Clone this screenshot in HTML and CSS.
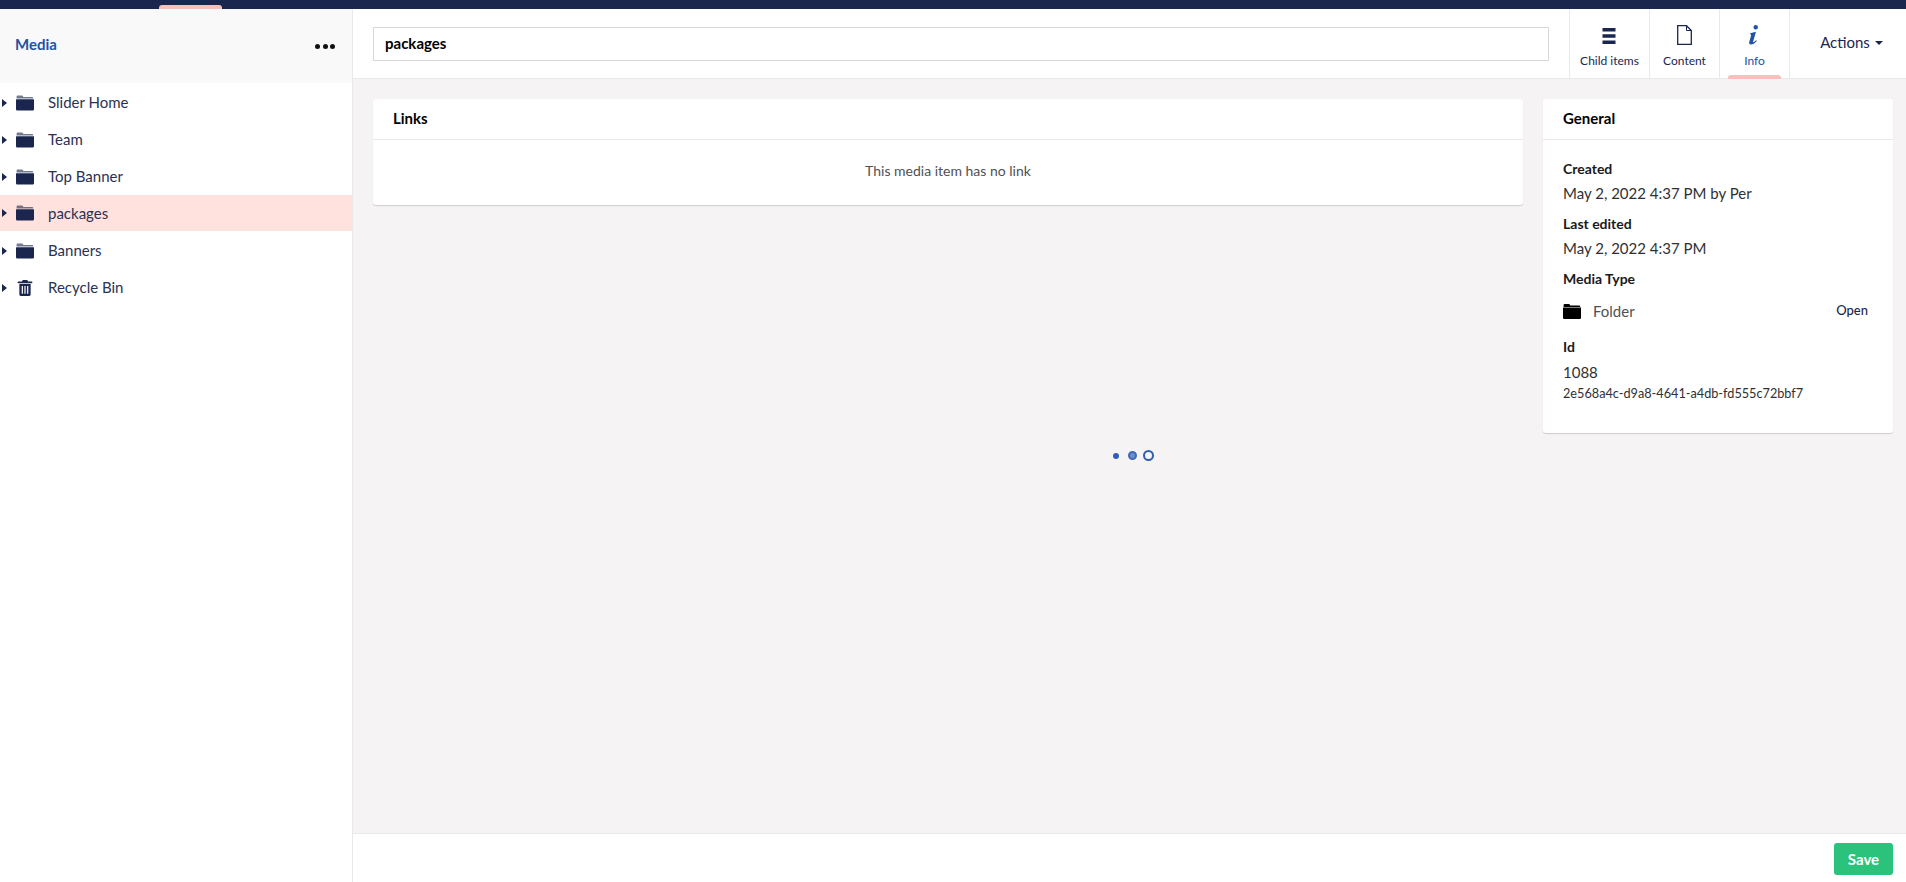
FILE: index.html
```html
<!DOCTYPE html>
<html lang="en">
<head>
<meta charset="utf-8">
<title>Media</title>
<link rel="stylesheet" href="styles.css">
</head>
<body>
<svg class="defs" width="0" height="0" aria-hidden="true">
  <symbol id="folder" viewBox="0 0 18 15">
    <path fill-opacity=".62" d="M.6 2.200V1q0-1 1-1h4.200q.8 0 1.200.8l.3.6h8.800q1.100 0 1.100 1V3H.6z"/>
    <path d="M.4 3.800h17.200q.4 0 .4.4v9.600q0 1.200-1.200 1.200H1.200Q0 15 0 13.800V4.200q0-.4.4-.4z"/>
  </symbol>
  <symbol id="folder-solid" viewBox="0 0 18 15">
    <path d="M.6 3V1q0-1 1-1h4.200q.8 0 1.200.8l.3.6h8.800q1.100 0 1.100 1V3z"/>
    <path d="M.4 3.400h17.200q.4 0 .4.4v10q0 1.200-1.200 1.200H1.200Q0 15 0 13.800v-10q0-.4.4-.4z"/>
  </symbol>
</svg>
<header class="topbar"><span class="topbar-tab"></span></header>
<div class="app">
  <aside class="sidebar">
    <div class="side-head">
      <h1 class="side-title">Media</h1>
      <span class="dots"><i></i><i></i><i></i></span>
    </div>
    <ul class="tree">
      <li class="node"><span class="caret"></span><svg class="node-icon"><use href="#folder"/></svg><span class="node-text">Slider Home</span></li>
      <li class="node"><span class="caret"></span><svg class="node-icon"><use href="#folder"/></svg><span class="node-text">Team</span></li>
      <li class="node"><span class="caret"></span><svg class="node-icon"><use href="#folder"/></svg><span class="node-text">Top Banner</span></li>
      <li class="node node-active"><span class="caret"></span><svg class="node-icon"><use href="#folder"/></svg><span class="node-text">packages</span></li>
      <li class="node"><span class="caret"></span><svg class="node-icon"><use href="#folder"/></svg><span class="node-text">Banners</span></li>
      <li class="node"><span class="caret"></span>
        <svg class="node-icon" viewBox="0 0 18 17"><path d="M6.500 0h5l.6 1.600H16a.6.6 0 0 1 0 1.800H2a.6.6 0 0 1 0-1.800h3.900zM3 4.300h12V15.500q0 1.500-1.500 1.500h-9Q3 17 3 15.500zM5.500 6.500v8h1.300v-8zM8.350 6.500v8h1.300v-8zM11.200 6.500v8h1.300v-8z" fill-rule="evenodd"/></svg>
        <span class="node-text">Recycle Bin</span></li>
    </ul>
  </aside>
  <main class="main">
    <div class="editor-head">
      <input class="name-input" type="text" value="packages" aria-label="Name">
      <nav class="tabs">
        <div class="tab">
          <svg class="tab-icon" viewBox="0 0 14 17"><path d="M0 0h13v3.600H0zM0 6.200h13v3.600H0zM0 12.400h13v3.600H0z"/></svg>
          <span>Child items</span>
        </div>
        <div class="tab">
          <svg class="tab-icon" viewBox="0 0 15 20"><path fill="#fff" stroke="currentColor" stroke-width="1.300" d="M.7.700h8.800l4.800 4.800v13.800H.7z"/><path fill="none" stroke="currentColor" stroke-width="1" d="M9.500.700v4.800h4.800"/></svg>
          <span>Content</span>
        </div>
        <div class="tab tab-active">
          <svg class="tab-icon" viewBox="0 0 15 20"><path d="M8.700 0a2.200 2.200 0 1 1 0 4.500 2.200 2.200 0 0 1 0-4.500zM3.300 8.200 9 6.800l-2.800 9.500q-.3 1.100.5.900.9-.3 2.400-2l.8.500C8.300 17.800 6.200 19.500 3.900 19.500q-2.300 0-1.600-2.700l1.800-6.300q.4-1.300-1.100-1.200z"/></svg>
          <span>Info</span>
          <b class="tab-mark"></b>
        </div>
      </nav>
      <div class="actions">Actions<span class="actions-caret"></span></div>
    </div>
    <div class="editor-body">
      <div class="col-main">
        <section class="card">
          <h2 class="card-head">Links</h2>
          <p class="no-link">This media item has no link</p>
        </section>
        <div class="loader"><i class="d1"></i><i class="d2"></i><i class="d3"></i></div>
      </div>
      <section class="card card-side">
        <h2 class="card-head">General</h2>
        <div class="info">
          <h3 class="label">Created</h3>
          <p class="value">May 2, 2022 4:37 PM by Per</p>
          <h3 class="label">Last edited</h3>
          <p class="value">May 2, 2022 4:37 PM</p>
          <h3 class="label">Media Type</h3>
          <div class="type-row">
            <svg class="type-icon"><use href="#folder-solid"/></svg>
            <span class="type-name">Folder</span>
            <span class="open">Open</span>
          </div>
          <h3 class="label">Id</h3>
          <p class="value value-id">1088</p>
          <p class="guid">2e568a4c-d9a8-4641-a4db-fd555c72bbf7</p>
        </div>
      </section>
    </div>
    <footer class="editor-foot"><button class="save" type="button">Save</button></footer>
  </main>
</div>
</body>
</html>
```
FILE: styles.css
```css
* { box-sizing: border-box; }
html, body { height: 100%; }
body {
  margin: 0;
  display: flex;
  flex-direction: column;
  height: 882px;
  overflow: hidden;
  font-family: Lato, "Noto Sans", sans-serif;
  font-size: 15px;
  color: #1b264f;
  background: #fff;
}
.defs { position: absolute; }
h1, h2, h3, p, ul { margin: 0; padding: 0; }
ul { list-style: none; }

.topbar { flex: 0 0 9px; background: #1b264f; padding-left: 159px; display: flex; align-items: flex-end; }
.topbar-tab { width: 63px; height: 4px; background: #f5c1bc; border-radius: 3px 3px 0 0; }

.app { flex: 1; display: flex; min-height: 0; }

.sidebar { flex: 0 0 353px; border-right: 1px solid #e9e9eb; background: #fff; }
.side-head {
  height: 74px;
  background: #f9f9f9;
  display: flex;
  align-items: center;
  justify-content: space-between;
  padding: 0 17px 4px 15px;
}
.side-title { font-size: 15px; font-weight: 700; color: #2152a3; }
.dots { display: flex; gap: 2.500px; padding-top: 4px; }
.dots i { width: 5px; height: 5px; border-radius: 50%; background: #111; }

.tree { padding-top: 1px; }
.node {
  height: 37px;
  display: flex;
  align-items: center;
  padding-left: 2px;
  font-size: 15px;
  color: #2b3152;
}
.node-text { margin-top: -2px; }
.node-active { background: #ffe1dd; height: 36px; margin-bottom: 1px; }
.node-active .node-text { margin-top: -1px; }
.caret {
  width: 0; height: 0;
  border-left: 5px solid #1b264f;
  border-top: 4px solid transparent;
  border-bottom: 4px solid transparent;
  margin-right: 9px;
}
.node-icon { width: 18px; height: 16px; fill: #1b264f; margin-right: 14px; flex: none; }

.main { flex: 1; min-width: 0; display: flex; flex-direction: column; background: #f5f3f4; }

.editor-head {
  height: 70px;
  background: #fff;
  border-bottom: 1px solid #e9e9eb;
  display: flex;
  align-items: stretch;
  padding-left: 20px;
}
.name-input {
  flex: 0 0 1176px;
  height: 34px;
  margin: 18px 20px 0 0;
  padding: 0 11px 3px;
  border: 1px solid #d8d7d9;
  font: 700 15px Lato, sans-serif;
  color: #000;
  outline: none;
}
.tabs { display: flex; border-left: 1px solid #e9e9eb; }
.tab {
  position: relative;
  width: 70px;
  border-right: 1px solid #e9e9eb;
  display: flex;
  flex-direction: column;
  align-items: center;
  padding-top: 16px;
  font-size: 12px;
  color: #1b264f;
}
.tab:first-child { width: 80px; }
.tab-icon { height: 20px; width: 15px; fill: currentColor; margin-bottom: 8px; }
.tab:first-child .tab-icon { height: 17px; margin: 3px 0 8px; }
.tab-active { color: #2152a3; }
.tab-mark {
  position: absolute;
  bottom: -1px; left: 8px; right: 8px;
  height: 4px;
  background: #f5c1bc;
  border-radius: 3px 3px 0 0;
}
.actions {
  flex: 1;
  display: flex;
  align-items: center;
  justify-content: center;
  gap: 5px;
  padding: 0 0 3px 7px;
  font-size: 15px;
  color: #1b264f;
}
.actions-caret { border-top: 4px solid #1b264f; border-left: 4px solid transparent; border-right: 4px solid transparent; margin-top: 2px; }

.editor-body { flex: 1; min-height: 0; display: flex; gap: 20px; padding: 20px 13px 0 20px; }
.col-main { flex: 0 0 1150px; position: relative; }
.card {
  background: #fff;
  border-radius: 3px;
  box-shadow: 0 1px 1px rgba(0, 0, 0, .16);
}
.card-side { flex: 1; height: 334px; }
.card-head {
  height: 41px;
  border-bottom: 1px solid #e9e9eb;
  padding: 0 20px 3px;
  display: flex;
  align-items: center;
  font-size: 15px;
  font-weight: 700;
  color: #000;
}
.no-link { height: 65px; display: flex; align-items: center; justify-content: center; padding-bottom: 4px; font-size: 14px; color: #515054; }

.loader { position: absolute; left: 740px; top: 351px; display: flex; align-items: center; }
.loader i { display: block; border-radius: 50%; background: #2f5fb3; }
.d1 { width: 6px; height: 6px; }
.d2 { width: 9px; height: 9px; margin-left: 9px; background: #6d90c9 !important; border: 2px solid #3d69b6; }
.d3 { width: 11px; height: 11px; margin-left: 6px; background: #f5f3f4 !important; border: 2.500px solid #2f5fb3; }

.info { padding: 18px 25px 14px 20px; color: #303033; }
.label { font-size: 14px; font-weight: 700; color: #1a1a1a; line-height: 22px; }
.value { font-size: 15px; line-height: 22px; margin: 2px 0 9px; }
.value-id { margin: 3px 0 0; }
.type-row { display: flex; align-items: center; height: 34px; margin: 4px 0 8px; font-size: 15px; }
.type-icon { width: 18px; height: 15px; fill: #000; margin-right: 12px; flex: none; }
.type-name { flex: 1; color: #515054; }
.open { font-size: 13px; color: #1b264f; font-weight: 500; margin-bottom: 2px; }
.guid { font-size: 12.700px; line-height: 18px; margin-top: 1px; }

.editor-foot {
  height: 49px;
  flex: none;
  background: #fff;
  border-top: 1px solid #e9e9eb;
  display: flex;
  justify-content: flex-end;
  align-items: flex-start;
  padding: 9px 13px 0 0;
}
.save {
  width: 59px;
  height: 32px;
  border: 0;
  border-radius: 3px;
  background: #2bc37c;
  color: #fff;
  font: 700 15px Lato, sans-serif;
}
```
